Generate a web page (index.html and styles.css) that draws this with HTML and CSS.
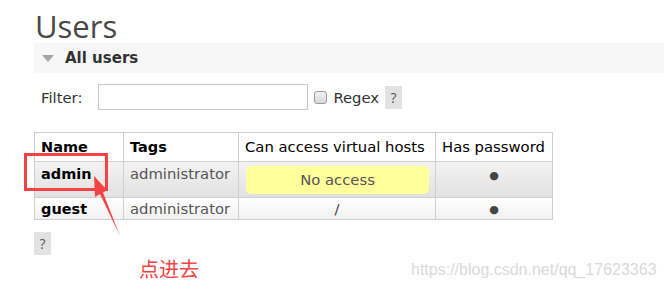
FILE: index.html
```html
<!DOCTYPE html>
<html lang="en">
<head>
  <meta charset="UTF-8" />
  <title>Users</title>
  <link rel="stylesheet" href="styles.css">
</head>
<body>

  <main class="container">
    <h1>Users</h1>

    <div class="section">
      <h2 class="section-title"><span class="arrow-down"></span>All users</h2>

      <div class="filter">
        <label for="filtro">Filter:</label>
        <input type="text" id="filtro">
        <input type="checkbox" id="regex" class="check">
        <label for="regex">Regex</label>
        <span class="help">?</span>
      </div>

      <table class="list">
        <thead>
          <tr>
            <th class="col-name">Name</th>
            <th class="col-tags">Tags</th>
            <th class="col-vhosts">Can access virtual hosts</th>
            <th class="col-pass">Has password</th>
          </tr>
        </thead>
        <tbody>
          <tr class="alt1">
            <td class="nome"><a href="#">admin</a></td>
            <td>administrator</td>
            <td><div class="no-access">No access</div></td>
            <td class="c"><span class="ponto">&#9679;</span></td>
          </tr>
          <tr class="alt2">
            <td class="nome"><a href="#">guest</a></td>
            <td>administrator</td>
            <td class="c">/</td>
            <td class="c"><span class="ponto">&#9679;</span></td>
          </tr>
        </tbody>
      </table>

      <span class="help help-bottom">?</span>
    </div>
  </main>

  <!-- marcacao por cima da captura -->
  <div class="marca-caixa"></div>
  <svg class="marca-seta" width="664" height="289" viewBox="0 0 664 289">
    <polygon points="94,176 107,190 103,192.5 120,236 100,194 95,197" fill="#f54343"/>
  </svg>
  <div class="marca-texto">点进去</div>
  <div class="watermark">https://blog.csdn.net/qq_17623363</div>

</body>
</html>
```

FILE: styles.css
```css
body {
  font-family: "DejaVu Sans", Verdana, sans-serif;
  font-size: 14.8px;
  color: #444;
  margin: 0;
  padding: 0;
  background-color: #fff;
}

.container {
  padding-left: 34px;
}

h1 {
  font-family: "Open Sans", "Segoe UI", sans-serif;
  font-weight: normal;
  font-size: 31px;
  color: #484848;
  margin: 0;
  padding: 4px 0 0 1px;
  height: 39px;
  line-height: 44px;
}

.section-title {
  display: flex;
  align-items: center;
  height: 30px;
  margin: 0;
  padding-left: 8px;
  background-color: #f7f7f7;
  font-size: 15px;
  font-weight: bold;
  color: #333;
}

.arrow-down {
  width: 0;
  height: 0;
  border-left: 6px solid transparent;
  border-right: 6px solid transparent;
  border-top: 7px solid #a5a5a5;
  margin-right: 11px;
}

.filter {
  display: flex;
  align-items: center;
  height: 26px;
  margin: 11px 0 22px 7px;
  color: #333;
}

.filter input[type="text"] {
  width: 210px;
  height: 26px;
  box-sizing: border-box;
  border: 1px solid #c8c8c8;
  margin: 0 6px 0 16px;
  padding: 0;
}

.check {
  appearance: none;
  width: 13px;
  height: 13px;
  margin: 0 6px 0 0;
  border: 1px solid #9a9a9a;
  border-radius: 3px;
  background: linear-gradient(#f2f2f2, #d8d8d8);
}

.help {
  display: inline-block;
  width: 17px;
  height: 23px;
  line-height: 23px;
  text-align: center;
  background-color: #e2e2e2;
  color: #555;
  font-family: "Open Sans", "Segoe UI", sans-serif;
  font-size: 14px;
  margin-left: 6px;
}

.help-bottom {
  display: block;
  margin: 12px 0 0 0;
}

table.list {
  border-collapse: collapse;
}

table.list th,
table.list td {
  border: 1px solid #cfcfcf;
  text-align: left;
  padding: 0 6px;
  white-space: nowrap;
  line-height: 18px;
}

table.list th {
  height: 28px;
  font-weight: normal;
  color: #000;
  background-color: #fff;
}

table.list th.col-name,
table.list th.col-tags {
  font-weight: bold;
  font-size: 14.5px;
}

.col-name { width: 76px; }
.col-tags { width: 102px; }
.col-vhosts { width: 184px; }
.col-pass { width: 104px; }

tr.alt1 {
  background: linear-gradient(#f3f3f3, #e1e1e1);
}

table.list tr.alt1 td {
  height: 32px;
  vertical-align: top;
  padding-top: 3px;
  padding-bottom: 0;
}

tr.alt2 {
  background: linear-gradient(#ffffff, #f1f1f1);
}

table.list tr.alt2 td {
  height: 21px;
}

table.list td {
  color: #555;
}

td.nome a {
  color: #000;
  font-weight: bold;
  text-decoration: none;
  font-size: 14.5px;
}

table.list td.c {
  text-align: center;
  color: #444;
}

.ponto {
  font-size: 11px;
}

.no-access {
  background-color: #ffff9c;
  border-radius: 5px;
  text-align: center;
  height: 28px;
  line-height: 28px;
  margin: 1px 0 0 1px;
  color: #555;
}

.marca-caixa {
  position: absolute;
  left: 24px;
  top: 153px;
  width: 78px;
  height: 32px;
  border: 3px solid #f54343;
}

.marca-seta {
  position: absolute;
  left: 0;
  top: 0;
  pointer-events: none;
}

.marca-texto {
  position: absolute;
  left: 139px;
  top: 254px;
  font-family: "Noto Sans CJK SC", sans-serif;
  font-size: 20px;
  color: #f54343;
}

.watermark {
  position: absolute;
  left: 411px;
  top: 261px;
  font-family: "Liberation Sans", Arial, sans-serif;
  font-size: 16px;
  color: #dadada;
}
```
